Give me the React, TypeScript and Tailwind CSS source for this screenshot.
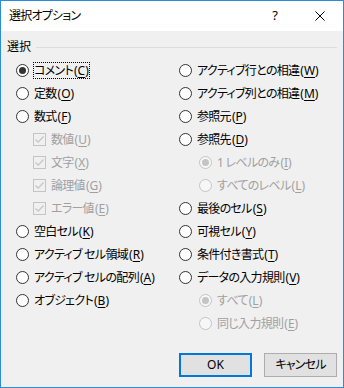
import React from 'react';

const FONT = "font-['Noto_Sans','Noto_Sans_CJK_JP',sans-serif] [font-feature-settings:'palt']";

type Item = {
  text: string;
  key: string;
  kind: 'radio' | 'check';
  indent?: boolean;
  disabled?: boolean;
  checked?: boolean;
  focus?: boolean;
};

const left: Item[] = [
  { text: 'コメント', key: 'C', kind: 'radio', checked: true, focus: true },
  { text: '定数', key: 'O', kind: 'radio' },
  { text: '数式', key: 'F', kind: 'radio' },
  { text: '数値', key: 'U', kind: 'check', indent: true, disabled: true, checked: true },
  { text: '文字', key: 'X', kind: 'check', indent: true, disabled: true, checked: true },
  { text: '論理値', key: 'G', kind: 'check', indent: true, disabled: true, checked: true },
  { text: 'エラー値', key: 'E', kind: 'check', indent: true, disabled: true, checked: true },
  { text: '空白セル', key: 'K', kind: 'radio' },
  { text: 'アクティブ セル領域', key: 'R', kind: 'radio' },
  { text: 'アクティブ セルの配列', key: 'A', kind: 'radio' },
  { text: 'オブジェクト', key: 'B', kind: 'radio' },
];

const right: Item[] = [
  { text: 'アクティブ行との相違', key: 'W', kind: 'radio' },
  { text: 'アクティブ列との相違', key: 'M', kind: 'radio' },
  { text: '参照元', key: 'P', kind: 'radio' },
  { text: '参照先', key: 'D', kind: 'radio' },
  { text: '1 レベルのみ', key: 'I', kind: 'radio', indent: true, disabled: true, checked: true },
  { text: 'すべてのレベル', key: 'L', kind: 'radio', indent: true, disabled: true },
  { text: '最後のセル', key: 'S', kind: 'radio' },
  { text: '可視セル', key: 'Y', kind: 'radio' },
  { text: '条件付き書式', key: 'T', kind: 'radio' },
  { text: 'データの入力規則', key: 'V', kind: 'radio' },
  { text: 'すべて', key: 'L', kind: 'radio', indent: true, disabled: true, checked: true },
  { text: '同じ入力規則', key: 'E', kind: 'radio', indent: true, disabled: true },
];

function Radio({ checked, disabled }: { checked?: boolean; disabled?: boolean }) {
  return (
    <span
      className={`flex h-[13px] w-[13px] shrink-0 items-center justify-center rounded-full border ${
        disabled ? 'border-[#c4c4c4] bg-[#f7f7f7]' : 'border-[#333333] bg-white'
      }`}
    >
      {checked && (
        <span className={`h-[7px] w-[7px] rounded-full ${disabled ? 'bg-[#c4c4c4]' : 'bg-[#333333]'}`} />
      )}
    </span>
  );
}

function Check() {
  return (
    <span className="flex h-[13px] w-[13px] shrink-0 items-center justify-center border border-[#c4c4c4]">
      <svg width="11" height="11" viewBox="0 0 11 11">
        <path d="M1.5 5.5 L4.2 8.2 L9.5 2.5" fill="none" stroke="#c4c4c4" strokeWidth="1.2" />
      </svg>
    </span>
  );
}

function Row({ item, side }: { item: Item; side: 'l' | 'r' }) {
  const pad = item.indent ? (side === 'l' ? 'pl-[17px]' : 'pl-[20px]') : '';
  const label = (
    <>
      <span className="tracking-[-0.7px]">{item.text}</span>
      <span className="ml-[1px]">(</span>
      <span className="underline underline-offset-2">{item.key}</span>)
    </>
  );
  return (
    <div className={`flex h-[23px] items-center gap-[5px] ${pad}`}>
      {item.kind === 'radio' ? <Radio checked={item.checked} disabled={item.disabled} /> : <Check />}
      {item.focus ? (
        <span className="-ml-[1px] border border-dotted border-black leading-[15px]">{label}</span>
      ) : (
        <span className={`whitespace-nowrap leading-[15px] ${item.disabled ? 'text-[#a0a0a0]' : ''}`}>{label}</span>
      )}
    </div>
  );
}

export default function App() {
  return (
    <div className={`${FONT} flex h-[388px] w-[344px] flex-col border border-[#2a8ddb] bg-[#f0f0f0] text-[12px] text-black`}>
      {/* Title bar */}
      <div className="flex h-[30px] items-center bg-white pl-[8px]">
        <span className="flex-1 tracking-[-0.8px]">選択オプション</span>
        <span className="mr-[37px] text-[13px]">?</span>
        <svg width="10" height="10" viewBox="0 0 10 10" className="mr-[18px]">
          <path d="M0.5 0.5 L9.5 9.5 M9.5 0.5 L0.5 9.5" stroke="#000" strokeWidth="1" />
        </svg>
      </div>

      {/* Group header */}
      <div className="mt-[9px] flex h-[14px] items-center px-[6px]">
        <span className="leading-[14px]">選択</span>
        <span className="ml-[5px] flex-1 border-t border-[#dcdcdc]" />
      </div>

      {/* Options */}
      <div className="mt-[5px] flex pl-[15px]">
        <div className="flex w-[163px] flex-col">
          {left.map((it, i) => (
            <Row key={i} item={it} side="l" />
          ))}
        </div>
        <div className="flex flex-col">
          {right.map((it, i) => (
            <Row key={i} item={it} side="r" />
          ))}
        </div>
      </div>

      {/* Buttons */}
      <div className="mt-[18px] flex justify-end gap-[12px] pr-[6px]">
        <button className="flex h-[24px] w-[73px] items-center justify-center border-2 border-[#0078d7] bg-[#e1e1e1]">
          OK
        </button>
        <button className="flex h-[24px] w-[73px] items-center justify-center border border-[#adadad] bg-[#e1e1e1] tracking-[-0.8px]">
          キャンセル
        </button>
      </div>
    </div>
  );
}
